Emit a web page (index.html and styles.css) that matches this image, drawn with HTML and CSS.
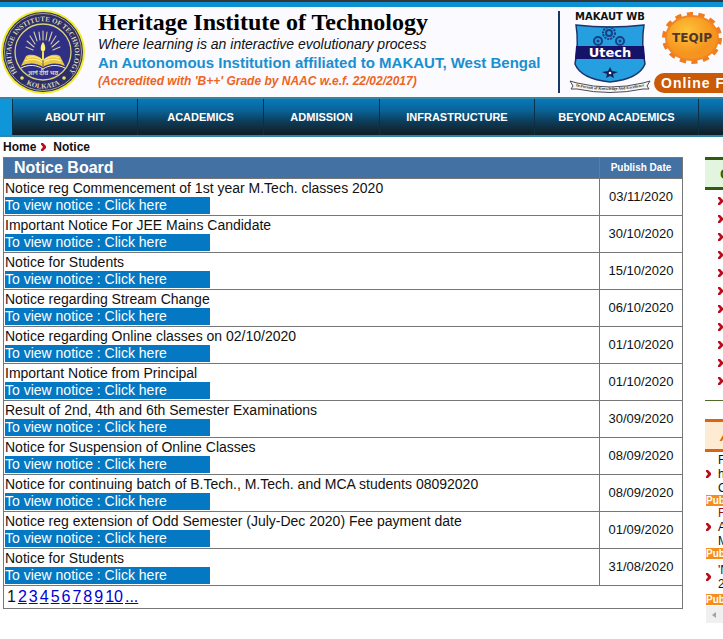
FILE: index.html
```html
<!DOCTYPE html>
<html lang="en">
<head>
<meta charset="utf-8">
<title>Notice Board - Heritage Institute of Technology</title>
<link rel="stylesheet" href="styles.css">
</head>
<body>
<svg width="0" height="0" class="defs" aria-hidden="true">
  <symbol id="chev" viewBox="0 0 5 8"><path d="M0 0H2L5 3V5L2 8H0V6.500L2 4L0 1.500Z" fill="#b90d1e"/></symbol>
</svg>
<div class="page">
  <header class="header">
    <svg class="seal" viewBox="0 0 86 86" role="img" aria-label="Institute seal">
      <defs>
        <path id="arcTop" d="M17 63 A32 32 0 1 1 69 63"/>
        <path id="arcBottom" d="M14 65 A36.400 36.400 0 0 0 72 65"/>
      </defs>
      <circle cx="43" cy="43" r="42" fill="#f0ea28"/>
      <circle cx="43" cy="43" r="40" fill="#2d2e68"/>
      <circle cx="43" cy="43" r="38.500" fill="none" stroke="#aaa67a" stroke-width="1"/>
      <circle cx="43" cy="43" r="28" fill="#302f86" stroke="#d8d17c" stroke-width="1.300"/>
      <text class="seal-text"><textPath href="#arcTop" startOffset="50%" text-anchor="middle">HERITAGE INSTITUTE OF TECHNOLOGY</textPath></text>
      <text class="seal-text"><textPath href="#arcBottom" startOffset="50%" text-anchor="middle">KOLKATA</textPath></text>
      <circle cx="22" cy="69" r="1.800" fill="#e9e36a"/><circle cx="64" cy="69" r="1.800" fill="#e9e36a"/>
      <g stroke="#d5cfa0" stroke-width="1.100" stroke-linecap="round">
        <path d="M43 22V31M39 23L40 31M47 23L46 31M34 23L37 32M52 23L49 32M30 27L35 35M56 27L51 35M27 32L34 38M59 32L52 38M26 38L33 41M60 38L53 41"/>
      </g>
      <path d="M43 33C46 37 46 42 43 43C40 42 40 37 43 33Z" fill="#fff56c"/>
      <path d="M42 43h2v8h-2z" fill="#f1df54"/>
      <path d="M43 51C37 45 30 45 26 47L21 57C29 53 37 54 43 58C49 54 57 53 65 57L60 47C56 45 49 45 43 51Z" fill="#e9c944"/>
      <path d="M43 52C37 47 31 47 27 49M43 54C36 49 30 50 25 52M43 52C49 47 55 47 59 49M43 54C50 49 56 50 61 52M21 59C29 55 37 56 43 60C49 56 57 55 65 59" fill="none" stroke="#fff6a8" stroke-width="1"/>
      <path d="M43 51V59" stroke="#6a5b33"/>
      <text x="43" y="66" class="seal-motto" text-anchor="middle">ज्ञानं दीर्घं भव</text>
    </svg>
    <div class="brand">
      <h1>Heritage Institute of Technology</h1>
      <p class="motto">Where learning is an interactive evolutionary process</p>
      <p class="affil">An Autonomous Institution affiliated to MAKAUT, West Bengal</p>
      <p class="accred">(Accredited with 'B++' Grade by NAAC w.e.f. 22/02/2017)</p>
    </div>
    <div class="partners">
      <svg class="utech" viewBox="0 0 82 82" role="img" aria-label="MAKAUT WB Utech">
        <defs><path id="ribbon" d="M6 75Q41 83 76 75"/></defs>
        <text x="41" y="9" class="makaut" text-anchor="middle">MAKAUT WB</text>
        <path d="M7 14Q41 18 75 14Q72 32 76 53Q70 68 41 71Q12 68 6 53Q10 32 7 14Z" fill="#259fdf" stroke="#1c356c" stroke-width="1.500"/>
        <path d="M7 35H75L76 48H6Z" fill="#151269"/>
        <g fill="none" stroke="#173f83" stroke-width="2">
          <circle cx="40" cy="22" r="6" stroke-dasharray="2 1"/><circle cx="40" cy="22" r="3"/>
          <circle cx="29" cy="30" r="4"/><circle cx="51" cy="30" r="4"/>
        </g>
        <circle cx="29" cy="30" r="1.500" fill="#173f83"/><circle cx="51" cy="30" r="1.500" fill="#173f83"/>
        <text x="41" y="46" class="utech-name" text-anchor="middle">Utech</text>
        <path d="M41 56L43 60L49 61L44 63L45 67L41 65L37 67L38 63L33 61L39 60Z" fill="#14245c"/>
        <circle cx="41" cy="62" r="1.300" fill="#fff"/>
        <path d="M1 70L8 72Q41 80 74 72L81 70L78 75L80 78L74 78Q41 85 8 78L2 78L4 75Z" fill="#f5f5f5" stroke="#4b4b55" stroke-width="1"/>
        <text class="ribbon-text"><textPath href="#ribbon" startOffset="50%" text-anchor="middle">In Pursuit of Knowledge And Excellence</textPath></text>
      </svg>
      <div class="online-col">
        <svg class="teqip" viewBox="0 0 62 54" role="img" aria-label="TEQIP">
          <defs><radialGradient id="gold" cx=".4" cy=".35"><stop offset="0" stop-color="#ffc43a"/><stop offset="1" stop-color="#f5941f"/></radialGradient></defs>
          <ellipse cx="31" cy="27" rx="27" ry="23" fill="none" stroke="#ee7c20" stroke-width="6" stroke-dasharray="6 5.240"/>
          <ellipse cx="31" cy="27" rx="26" ry="22" fill="url(#gold)" stroke="#f28523" stroke-width="2"/>
          <text x="31" y="31" class="teqip-name" text-anchor="middle">TEQIP</text>
        </svg>
        <a class="online" href="#">Online F</a>
      </div>
    </div>
  </header>
  <nav class="nav">
    <a href="#">ABOUT HIT</a><a href="#">ACADEMICS</a><a href="#">ADMISSION</a><a href="#">INFRASTRUCTURE</a><a href="#">BEYOND ACADEMICS</a><span></span>
  </nav>
  <div class="crumbs"><a href="#">Home</a><svg class="chev"><use href="#chev"/></svg><a href="#">Notice</a></div>
  <div class="content">
    <main>
      <table class="board">
        <thead><tr><th class="title" scope="col">Notice Board</th><th class="date" scope="col">Publish Date</th></tr></thead>
        <tbody>
          <tr><td>Notice reg Commencement of 1st year M.Tech. classes 2020<a class="view" href="#">To view notice : Click here</a></td><td class="date">03/11/2020</td></tr>
          <tr><td>Important Notice For JEE Mains Candidate<a class="view" href="#">To view notice : Click here</a></td><td class="date">30/10/2020</td></tr>
          <tr><td>Notice for Students<a class="view" href="#">To view notice : Click here</a></td><td class="date">15/10/2020</td></tr>
          <tr><td>Notice regarding Stream Change<a class="view" href="#">To view notice : Click here</a></td><td class="date">06/10/2020</td></tr>
          <tr><td>Notice regarding Online classes on 02/10/2020<a class="view" href="#">To view notice : Click here</a></td><td class="date">01/10/2020</td></tr>
          <tr><td>Important Notice from Principal<a class="view" href="#">To view notice : Click here</a></td><td class="date">01/10/2020</td></tr>
          <tr><td>Result of 2nd, 4th and 6th Semester Examinations<a class="view" href="#">To view notice : Click here</a></td><td class="date">30/09/2020</td></tr>
          <tr><td>Notice for Suspension of Online Classes<a class="view" href="#">To view notice : Click here</a></td><td class="date">08/09/2020</td></tr>
          <tr><td>Notice for continuing batch of B.Tech., M.Tech. and MCA students 08092020<a class="view" href="#">To view notice : Click here</a></td><td class="date">08/09/2020</td></tr>
          <tr><td>Notice reg extension of Odd Semester (July-Dec 2020) Fee payment date<a class="view" href="#">To view notice : Click here</a></td><td class="date">01/09/2020</td></tr>
          <tr><td>Notice for Students<a class="view" href="#">To view notice : Click here</a></td><td class="date">31/08/2020</td></tr>
        </tbody>
        <tfoot><tr><td colspan="2"><div class="pager"><span>1</span><a href="#">2</a><a href="#">3</a><a href="#">4</a><a href="#">5</a><a href="#">6</a><a href="#">7</a><a href="#">8</a><a href="#">9</a><a href="#">10</a><a href="#">...</a></div></td></tr></tfoot>
      </table>
    </main>
    <aside>
      <section class="quick">
        <h2>C</h2>
        <ul>
          <li><svg class="chev"><use href="#chev"/></svg></li><li><svg class="chev"><use href="#chev"/></svg></li><li><svg class="chev"><use href="#chev"/></svg></li><li><svg class="chev"><use href="#chev"/></svg></li><li><svg class="chev"><use href="#chev"/></svg></li><li><svg class="chev"><use href="#chev"/></svg></li><li><svg class="chev"><use href="#chev"/></svg></li><li><svg class="chev"><use href="#chev"/></svg></li><li><svg class="chev"><use href="#chev"/></svg></li><li><svg class="chev"><use href="#chev"/></svg></li><li><svg class="chev"><use href="#chev"/></svg></li>
        </ul>
      </section>
      <section class="news">
        <h2>A</h2>
        <div class="feed">
          <div class="item"><svg class="chev"><use href="#chev"/></svg><p>F<br>h<br>C</p></div><div class="pub">Pub</div>
          <div class="item"><svg class="chev"><use href="#chev"/></svg><p><span class="first">F</span><br>A<br>M</p></div><div class="pub">Pub</div>
          <div class="item last"><svg class="chev"><use href="#chev"/></svg><p>'N<br>2</p></div><div class="pub">Pub</div>
          <div class="scroll"><svg viewBox="0 0 4 6"><path d="M4 0V6L0 3Z" fill="#a3a3a3"/></svg></div>
        </div>
      </section>
    </aside>
  </div>
</div>
</body>
</html>
```
FILE: styles.css
```css
* { box-sizing: border-box; }
body { margin: 0; background: #fff; color: #111; font-family: "Liberation Sans", Arial, sans-serif; overflow-x: hidden; }
h1, h2, p, ul { margin: 0; padding: 0; }
ul { list-style: none; }
a { color: inherit; text-decoration: none; }
.defs { position: absolute; }
.page { min-width: 960px; border-top: 2px solid #34383a; }
.chev { width: 5px; height: 8px; flex: none; display: block; }

.header { display: flex; height: 95px; border-top: 5px solid #0c92d2; background: #fafaff; }
.seal { width: 86px; height: 86px; margin: 2px 12px 0 0; flex: none; }
.seal-text { font: bold 7px "Liberation Serif", serif; fill: #d9d5bb; }
.seal-motto { font: bold 6px "Noto Sans", sans-serif; fill: #d9d4bd; }
.brand { width: 460px; padding-top: 2px; white-space: nowrap; }
.brand h1 { font: bold 24px/27px "Liberation Serif", "Times New Roman", serif; color: #000; }
.motto { font-size: 14px; font-style: italic; line-height: 16px; }
.affil { font-size: 15px; font-weight: bold; line-height: 21px; color: #1b8fce; }
.accred { font-size: 12px; font-weight: bold; font-style: italic; line-height: 17px; color: #ee6420; }
.partners { display: flex; margin-top: 4px; height: 82px; padding-left: 9px; border-left: 2px solid #153a66; }
.utech { width: 82px; height: 82px; }
.makaut { font: bold 10px "DejaVu Sans", sans-serif; fill: #111; }
.utech-name { font: bold 13px "DejaVu Sans", sans-serif; fill: #fff; }
.ribbon-text { font: bold 4px "Liberation Serif", serif; fill: #222; }
.online-col { display: flex; flex-direction: column; justify-content: space-between; padding-left: 3px; }
.teqip { width: 62px; height: 54px; margin: 0 0 0 7px; overflow: visible; }
.teqip-name { font: bold 12px "DejaVu Sans", sans-serif; fill: #4d382b; }
.online { width: 160px; padding-left: 7px; border-radius: 10px; background: #cb5a08; color: #fff; font-size: 14px; font-weight: bold; line-height: 20px; letter-spacing: 1px; }

.nav { display: grid; grid-template-columns: 125px 126px 116px 155px 164px 1fr; height: 40px; padding-left: 12px; background: #0e96d9; border-top: 2px solid #2e86a8; border-bottom: 2px solid #2e86a8; }
.nav > * { display: grid; place-items: center; border-left: 1px solid #0b3046; background: linear-gradient(#0879b8, #0a649a 30%, #0e3a55 65%, #111c22); color: #fff; font-size: 11px; font-weight: bold; }

.crumbs { display: flex; align-items: center; height: 20px; padding-left: 3px; font-size: 12px; font-weight: bold; }
.crumbs .chev { margin: 0 7px 0 5px; }

.content { display: flex; align-items: flex-start; padding-left: 3px; }
main { flex: 1; margin-right: 22px; }
aside { width: 255px; flex: none; }

.board { width: 100%; border-collapse: collapse; font-size: 14px; line-height: 18px; }
.board th, .board td { border: 1px solid #777; padding: 0 1px; text-align: left; }
.board tbody td:first-child { padding-bottom: 1px; }
.board th { height: 21px; background: #4471a3; color: #fff; line-height: 20px; }
.board .title { padding-left: 10px; font-size: 16px; }
.board th.date { font-size: 10px; }
.board .date { width: 83px; text-align: center; font-size: 13px; }
.view { display: block; width: 205px; background: #0478c2; color: #fff; line-height: 17px; }
.pager { display: flex; gap: 2px; height: 22px; align-items: center; padding-left: 2px; font-size: 16px; }
.pager a { color: #0000d8; text-decoration: underline; }

aside h2 { height: 33px; padding-left: 15px; line-height: 27px; font-size: 15px; }
.quick h2 { border-top: 3px solid #315c10; border-bottom: 3px solid #315c10; background: #e2f6df; color: #315c10; }
.quick { padding-bottom: 10px; border-bottom: 1px solid #4f6b25; }
.quick ul { padding-top: 2px; }
.quick li { display: flex; align-items: center; height: 18px; padding-left: 13px; }
.news { padding-top: 18px; }
.news h2 { border-top: 3px solid #dd6212; border-bottom: 3px solid #dd6212; background: #fdebd3; color: #dd6212; font-style: italic; }
.feed { padding: 1px 0 0 1px; }
.item { display: flex; align-items: center; gap: 7px; font-size: 12px; line-height: 14px; }
.item .first { color: #a01020; }
.last { padding: 4px 0 3px; }
.pub { height: 11px; background: #f58d1d; color: #fff; font-size: 10px; font-weight: bold; line-height: 11px; }
.scroll { display: flex; align-items: center; height: 17px; margin-top: 1px; padding-left: 6px; background: #f0f0f0; }
.scroll svg { width: 4px; height: 6px; }
```
